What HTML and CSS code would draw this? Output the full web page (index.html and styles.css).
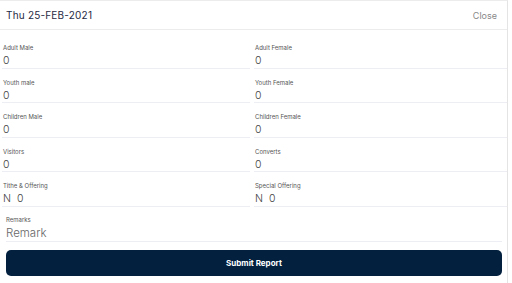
FILE: index.html
```html
<!DOCTYPE html>
<html lang="en">
<head>
    <meta charset="UTF-8">
    <meta name="viewport" content="width=device-width, initial-scale=1.0">
    <title>Service Report</title>
    <link rel="stylesheet" href="styles.css">
</head>
<body>
    <div class="panel">
        <div class="header">
            <span class="date">Thu 25-FEB-2021</span>
            <span class="close">Close</span>
        </div>
        <div class="grid">
            <div class="field"><label>Adult Male</label><div class="value">0</div></div>
            <div class="field"><label>Adult Female</label><div class="value">0</div></div>
            <div class="field"><label>Youth male</label><div class="value">0</div></div>
            <div class="field"><label>Youth Female</label><div class="value">0</div></div>
            <div class="field"><label>Children Male</label><div class="value">0</div></div>
            <div class="field"><label>Children Female</label><div class="value">0</div></div>
            <div class="field"><label>Visitors</label><div class="value">0</div></div>
            <div class="field"><label>Converts</label><div class="value">0</div></div>
            <div class="field"><label>Tithe &amp; Offering</label><div class="value">N&nbsp;&nbsp;0</div></div>
            <div class="field"><label>Special Offering</label><div class="value">N&nbsp;&nbsp;0</div></div>
        </div>
        <div class="remarks">
            <label>Remarks</label>
            <div class="placeholder">Remark</div>
        </div>
        <button class="submit">Submit Report</button>
    </div>
</body>
</html>
```

FILE: styles.css
```css
body { margin: 0; font-family: "Inter", "Open Sans", sans-serif; background: #fff; }
.panel { width: 508px; height: 283px; border-top: 1px solid #ececec; border-right: 1px solid #e4e4e4; box-sizing: border-box; }
.header {
    height: 28px; display: flex; justify-content: space-between; align-items: center;
    padding: 0 10px 0 6px; border-bottom: 1px solid #ececec;
}
.date { font-size: 10px; color: #1f2a44; letter-spacing: 0.2px; }
.close { font-size: 9px; color: #888; }
.grid { display: grid; grid-template-columns: 248px 253px; column-gap: 4px; padding: 4px 0 0 2px; }
.field { height: 34.5px; box-sizing: border-box; padding: 10px 0 0 1px; border-bottom: 1px solid #eceef3; }
.field label, .remarks label { display: block; font-size: 6px; color: #555; line-height: 8px; }
.value { font-size: 10.5px; font-weight: 300; color: #444; line-height: 13px; margin-top: 2px; }
.remarks { margin: 0 5px 0 6px; height: 35px; box-sizing: border-box; padding-top: 9px; border-bottom: 1px solid #eceef3; }
.remarks .placeholder { font-size: 11.5px; font-weight: 300; color: #666; line-height: 14px; margin-top: 2px; }
.submit {
    display: block; width: 496px; height: 26px; margin: 8px 0 0 6px; border: none; border-radius: 5px;
    background: #03203f; color: #fff; font-family: inherit; font-weight: 700; font-size: 8px; cursor: pointer;
}
```
